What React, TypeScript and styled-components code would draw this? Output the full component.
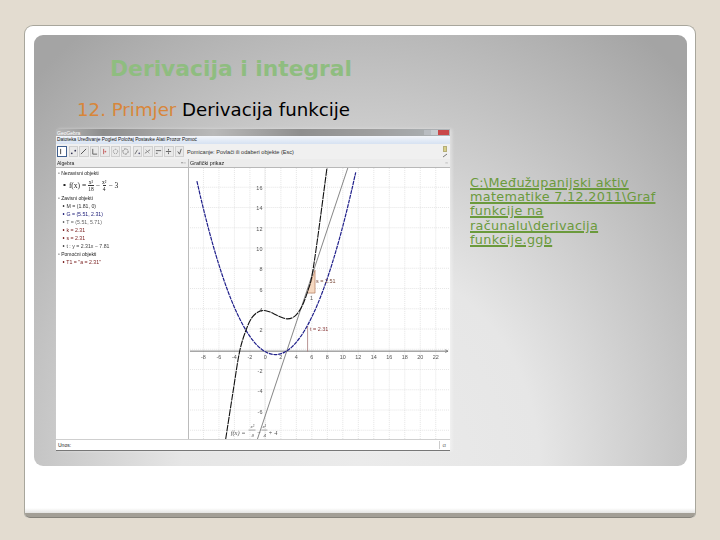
import React from "react";
import styled, { createGlobalStyle } from "styled-components";

const Global = createGlobalStyle`
  html, body { margin: 0; padding: 0; background: #e3dcd0; }
  body { width: 720px; height: 540px; overflow: hidden; font-family: "DejaVu Sans", sans-serif; }
`;
const Page = styled.div`
  width: 720px; height: 540px; padding: 25px 24px 22px 24px; box-sizing: border-box; background: #e3dcd0;
`;
const Slide = styled.div`
  height: 493px; display: flex; flex-direction: column; box-sizing: border-box;
  background: #fff; border: 1px solid #a8a69c; border-bottom: 0; border-radius: 9px 9px 5px 5px;
  padding: 9px 8px 0 9px;
`;
const Panel = styled.section`
  height: 431px; box-sizing: border-box; border-radius: 9px; padding: 21px 0 0 0;
  background: radial-gradient(ellipse 72% 125% at 50% 100%, #ebebeb 0%, #e6e6e6 38%, #a4a4a4 100%);
`;
const Title = styled.h1`
  margin: 0 0 0 76px; font: bold 21.8px/26px "DejaVu Sans", sans-serif; color: #8fbd80; letter-spacing: 0;
`;
const Subtitle = styled.h2`
  margin: 16px 0 0 43px; font: normal 18.2px/24px "DejaVu Sans", sans-serif; color: #000;
`;
const Accent = styled.span` color: #d8863a; `;
const Content = styled.div`
  display: flex; align-items: flex-start; margin: 7px 0 0 22px;
`;
const AppWindow = styled.div`
  width: 394px; height: 321px; flex: none; display: flex; flex-direction: column; background: #fff;
  font: 5px/8px "Liberation Sans", sans-serif; color: #222; border-bottom: 1px solid #777;
  box-shadow: 2px 0 3px rgba(255,255,255,.4); overflow: hidden; filter: blur(.3px);
`;
const TitleBar = styled.div`
  height: 7px; flex: none; display: flex; align-items: center; justify-content: space-between; padding: 0 1px 0 1px;
  background: linear-gradient(90deg, #b6b6b6 0%, #8e8e8e 12%, #b9b9b9 40%, #8f8f8f 62%, #9e9e9e 80%, #aeb4b8 100%);
  color: #fff;
`;
const WinButtons = styled.div` display: flex; width: 25px; height: 5px; `;
const WinButton = styled.span<{ $c: string; $w: number }>`
  width: ${p => p.$w}px; height: 5px; background: ${p => p.$c};
`;
const MenuBar = styled.div`
  height: 8px; flex: none; padding-left: 1px; line-height: 8px; font-size: 4.8px; color: #111;
  background: linear-gradient(#f3f6fb, #d6e2f2);
`;
const ToolBar = styled.div`
  height: 15px; flex: none; display: flex; align-items: center; gap: 1px; padding: 0 1px; background: #f0f0f0;
  color: #333;
`;
const ToolButton = styled.div<{ $active?: boolean; $gap?: boolean }>`
  width: 7.5px; height: 9px; flex: none; display: flex; align-items: center; justify-content: center;
  background: ${p => (p.$active ? "#fff" : "#e9e9e9")};
  border: 1px solid ${p => (p.$active ? "#3f5f8f" : "#cfcfcf")}; box-sizing: content-box;
  margin-right: ${p => (p.$gap ? "1px" : "0")};
`;
const ToolHint = styled.span` margin-left: 2px; font-size: 5.6px; white-space: nowrap; flex: 1; `;
const ToolEnd = styled.div`
  width: 8px; display: flex; flex-direction: column; align-items: center; gap: 1px;
`;
const Swatch = styled.span` width: 4px; height: 6px; background: #d8d08a; border: 1px solid #b5ae78; box-sizing: border-box; `;
const Body = styled.div` flex: 1; display: flex; min-height: 0; `;
const AlgebraPane = styled.aside`
  width: 133px; flex: none; display: flex; flex-direction: column; border-right: 1px solid #bbb; box-sizing: border-box;
`;
const PaneHeader = styled.div`
  height: 8px; flex: none; display: flex; justify-content: space-between; padding: 0 2px 0 1px; line-height: 8px;
  background: #ececec; border-bottom: 1px solid #b8b8b8; font-size: 5px;
`;
const PaneTool = styled.span` color: #999; font-size: 4px; `;
const Tree = styled.div` padding: 1px 0 0 2px; display: flex; flex-direction: column; `;
const Group = styled.div` height: 8px; line-height: 8px; `;
const Item = styled.div<{ $c: string }>`
  height: 8px; line-height: 8px; padding-left: 4px; color: ${p => p.$c}; font-size: 5.2px; white-space: nowrap;
`;
const FormulaItem = styled.div`
  display: flex; align-items: center; gap: 1px; height: 17px; padding-left: 4px; font: 7.5px "Liberation Serif", serif; color: #222;
`;
const Frac = styled.span`
  display: inline-flex; flex-direction: column; align-items: center; font-size: 5.5px; line-height: 6px; margin: 0 1px;
`;
const FracBar = styled.span` border-top: 1px solid #333; padding-top: 0; `;
const GraphPane = styled.div` flex: 1; display: flex; flex-direction: column; min-width: 0; `;
const GraphHeader = styled(PaneHeader)` font-size: 5.4px; `;
const Plot = styled.svg` display: block; flex: 1; width: 261px; height: 273px; background: #fff; `;
const InputBar = styled.div`
  height: 11px; flex: none; display: flex; align-items: center; justify-content: space-between; padding: 0 4px 0 2px;
  background: #fff; border-top: 1px solid #cfcfcf; box-sizing: border-box;
`;
const InputBtn = styled.span` color: #777; font-size: 6px; border-left: 1px solid #ccc; padding-left: 3px; `;
const LinkBlock = styled.a`
  display: block; margin: 47px 0 0 20px; width: 192px; color: #6b9a3c; text-decoration: underline;
  text-decoration-thickness: 1.5px; font: 12.8px/14.2px "DejaVu Sans", sans-serif; letter-spacing: .3px;
`;
const Spacer = styled.div` flex: 1; `;
const Curl = styled.div`
  height: 5px; margin: 0 -8px 0 -9px; background: #a39f96; border-radius: 0 0 5px 5px; border-bottom: 1px solid #85827a;
  box-sizing: border-box;
`;
const Fade = styled.div`
  height: 5px; margin: 0 -8px 0 -9px; background: linear-gradient(#fff, #e4e4e2);
`;

const smooth = (pts: number[][]) => {
  let d = `M${pts[0][0]} ${pts[0][1]}`;
  for (let i = 0; i < pts.length - 1; i++) {
    const p0 = pts[Math.max(i - 1, 0)], p1 = pts[i], p2 = pts[i + 1], p3 = pts[Math.min(i + 2, pts.length - 1)];
    d += ` C${p1[0] + (p2[0] - p0[0]) / 6} ${p1[1] + (p2[1] - p0[1]) / 6} ${p2[0] - (p3[0] - p1[0]) / 6} ${p2[1] - (p3[1] - p1[1]) / 6} ${p2[0]} ${p2[1]}`;
  }
  return d;
};
const parabola: number[][] = [];
for (let x = 196; x <= 358; x += 4) parabola.push([x, 355 - 0.028 * (x - 275) ** 2]);
const cubic = smooth([[225, 440], [232, 395], [239, 352], [246, 329], [252, 317], [260, 311], [268, 311.5], [278, 316], [287, 319], [295, 316], [302, 306], [308, 290], [312, 275], [318, 235], [327, 167]]);

const xLabels = [-8, -6, -4, -2, 0, 2, 4, 6, 8, 10, 12, 14, 16, 18, 20, 22];
const yLabels = [16, 14, 12, 10, 8, 6, 4, 2, -2, -4, -6];
const yFor = (v: number) => 351 - v * 10.25;
const xFor = (v: number) => 265 + v * 7.8;

const icons = [
  <path key="a" d="M3 1v6" stroke="#333" />,
  <><circle cx="2" cy="6" r="1" fill="#335" /><circle cx="6" cy="3" r="1" fill="#335" /></>,
  <path d="M1 7L7 1" stroke="#444" />,
  <path d="M2 1v6h5" stroke="#555" fill="none" />,
  <><path d="M3 1v6" stroke="#b55" /><circle cx="5" cy="4" r="1" fill="#c66" /></>,
  <circle cx="4" cy="4" r="2.5" stroke="#777" fill="none" strokeDasharray="1 1" />,
  <circle cx="4" cy="4" r="3" stroke="#666" fill="none" strokeDasharray="2 1" />,
  <><path d="M1 7L4 2" stroke="#666" /><circle cx="6" cy="6" r="1" fill="#557" /></>,
  <path d="M1 6L7 2M2 2l1 1M5 5l1 1" stroke="#777" />,
  <path d="M1 3h6M1 6h2" stroke="#555" />,
  <path d="M1 4h6M4 1v2M4 5v2" stroke="#555" />,
  <path d="M2 4l2 3 2-6" stroke="#555" fill="none" />,
];

export default function App() {
  return (
    <Page>
      <Global />
      <Slide>
        <Panel>
          <Title>Derivacija i integral</Title>
          <Subtitle><Accent>12. Primjer</Accent> Derivacija funkcije</Subtitle>
          <Content>
            <AppWindow>
              <TitleBar>
                <span>GeoGebra</span>
                <WinButtons>
                  <WinButton $c="#b9bdc2" $w={7} /><WinButton $c="#c8ccd0" $w={7} /><WinButton $c="#c9484a" $w={11} />
                </WinButtons>
              </TitleBar>
              <MenuBar>Datoteka Uređivanje Pogled Položaj Postavke Alati Prozor Pomoć</MenuBar>
              <ToolBar>
                {icons.map((ic, i) => (
                  <ToolButton key={i} $active={i === 0} $gap={i === 0 || i === 6}>
                    <svg width="7" height="7" viewBox="0 0 8 8" strokeWidth="1">{ic}</svg>
                  </ToolButton>
                ))}
                <ToolHint>Pomicanje: Povlači ili odaberi objekte (Esc)</ToolHint>
                <ToolEnd>
                  <Swatch />
                  <svg width="6" height="5" viewBox="0 0 6 5"><path d="M1 4L5 1" stroke="#777" /></svg>
                </ToolEnd>
              </ToolBar>
              <Body>
                <AlgebraPane>
                  <PaneHeader>Algebra<PaneTool>▾▫▫</PaneTool></PaneHeader>
                  <Tree>
                    <Group>▫ Nezavisni objekti</Group>
                    <FormulaItem>
                      ∘ f(x) = <Frac><span>x³</span><FracBar>18</FracBar></Frac> − <Frac><span>x²</span><FracBar>4</FracBar></Frac> − 3
                    </FormulaItem>
                    <Group>▫ Zavisni objekti</Group>
                    <Item $c="#333">∘ M = (1.81, 0)</Item>
                    <Item $c="#20207a">∘ G = (5.51, 2.31)</Item>
                    <Item $c="#666">∘ T = (5.51, 5.71)</Item>
                    <Item $c="#7a2020">∘ k = 2.31</Item>
                    <Item $c="#7a2020">∘ s = 2.31</Item>
                    <Item $c="#444">∘ t : y = 2.31x − 7.81</Item>
                    <Group>▫ Pomoćni objekti</Group>
                    <Item $c="#7a2020">∘ T1 = "a = 2.31"</Item>
                  </Tree>
                </AlgebraPane>
                <GraphPane>
                  <GraphHeader>Grafički prikaz<PaneTool>▫▫</PaneTool></GraphHeader>
                  <Plot viewBox="189 167 261 273">
                    {Array.from({ length: 18 }, (_, i) => (
                      <line key={i} x1={187 + i * 15.6} x2={187 + i * 15.6} y1={167} y2={440} stroke="#d9d9d9" strokeWidth=".7" strokeDasharray="1 1" />
                    ))}
                    {Array.from({ length: 15 }, (_, i) => (
                      <line key={i} y1={166 + i * 20.4} y2={166 + i * 20.4} x1={189} x2={450} stroke="#d9d9d9" strokeWidth=".7" strokeDasharray="1 1" />
                    ))}
                    <line x1="189" x2="449" y1="351.5" y2="351.5" stroke="#666" strokeWidth=".9" />
                    <path d="M446 350l3 1.5-3 1.5" stroke="#666" fill="none" strokeWidth=".6" />
                    <line x1="264.5" x2="264.5" y1="167" y2="440" stroke="#e4e4e4" strokeWidth=".6" />
                    <g fontFamily="Liberation Sans" fontSize="5.5" fill="#555">
                      {xLabels.map(v => <text key={v} x={xFor(v)} y={359} textAnchor="middle">{v}</text>)}
                      {yLabels.map(v => <text key={v} x={262} y={yFor(v) + 2} textAnchor="end">{v}</text>)}
                    </g>
                    <path d="M307 293L315 293L315 270Z" fill="#f5d8c0" stroke="#a86a4a" strokeWidth=".6" />
                    <path d="M307.5 326V352" stroke="#a87a7a" strokeWidth=".8" />
                    <line x1="257" y1="440" x2="348" y2="167" stroke="#666" strokeWidth=".8" />
                    <path d={smooth(parabola)} stroke="#1f1f8a" fill="none" strokeWidth="1.2" strokeDasharray="4 .8" />
                    <path d={cubic} stroke="#111" fill="none" strokeWidth="1.1" strokeDasharray="7 .8" />
                    <g fontFamily="Liberation Sans" fontSize="5.5">
                      <text x="316" y="283" fill="#7a4a3a">s = 2.51</text>
                      <text x="310" y="300" fill="#555">1</text>
                      <text x="310" y="331" fill="#8a3a3a">t = 2.31</text>
                    </g>
                    <g fontFamily="Liberation Serif" fontSize="6.5" fill="#555" fontStyle="italic">
                      <text x="230" y="436">f(x) =</text>
                      <text x="250" y="429" fontSize="5">x³</text>
                      <line x1="248" x2="255" y1="431" y2="431" stroke="#555" strokeWidth=".5" />
                      <text x="251" y="438" fontSize="5">8</text>
                      <text x="256" y="436">−</text>
                      <text x="262" y="429" fontSize="5">x²</text>
                      <line x1="261" x2="267" y1="431" y2="431" stroke="#555" strokeWidth=".5" />
                      <text x="263" y="438" fontSize="5">4</text>
                      <text x="268" y="436">+ 4</text>
                    </g>
                  </Plot>
                </GraphPane>
              </Body>
              <InputBar>Unos:<InputBtn>α</InputBtn></InputBar>
            </AppWindow>
            <LinkBlock href="#">C:\Međužupanijski aktiv matematike 7.12.2011\Graf funkcije na računalu\derivacija funkcije.ggb</LinkBlock>
          </Content>
        </Panel>
        <Spacer />
        <Fade />
        <Curl />
      </Slide>
    </Page>
  );
}
